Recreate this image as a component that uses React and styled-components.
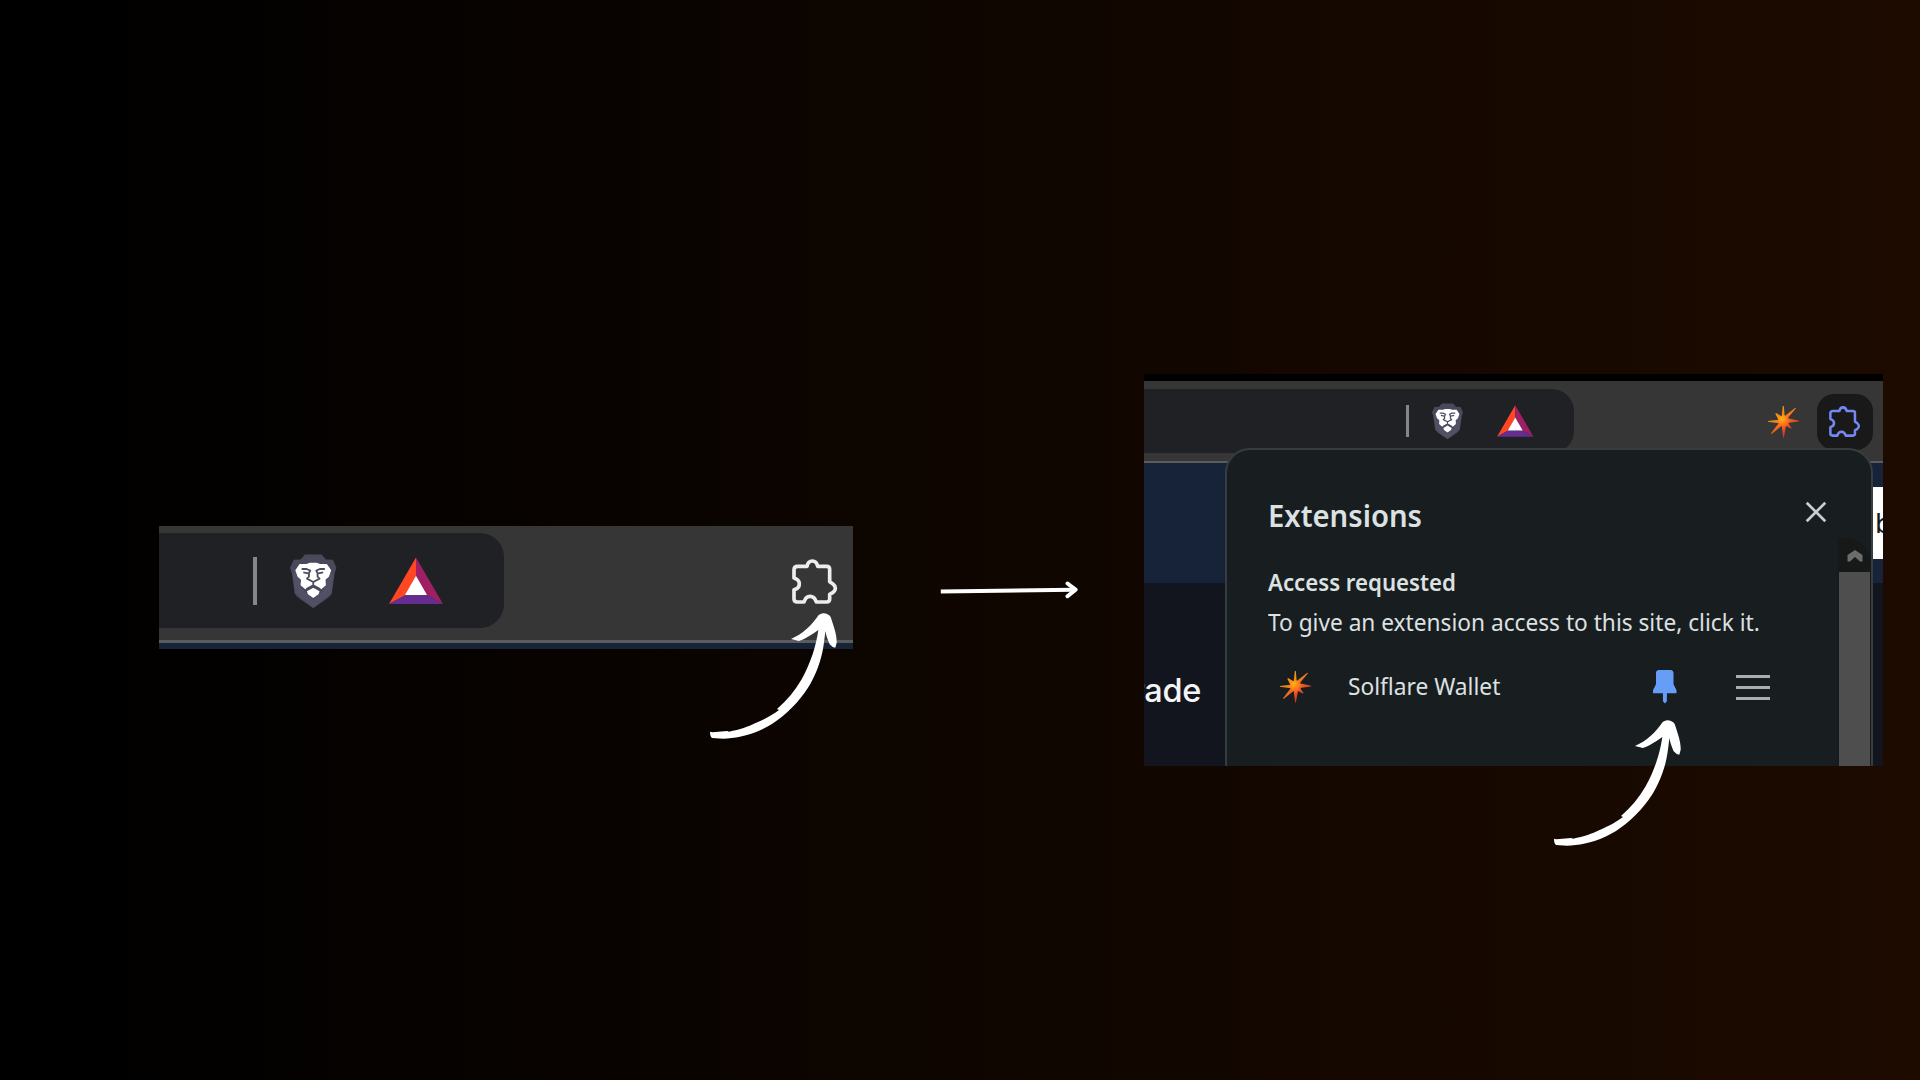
import React from "react";
import styled, { createGlobalStyle } from "styled-components";

const GlobalStyle = createGlobalStyle`
  * { box-sizing: border-box; }
  body { margin: 0; background: #000; overflow: hidden; }
  svg { display: block; }
`;

const Stage = styled.main`
  position: relative;
  display: flex;
  align-items: flex-start;
  width: 1920px;
  height: 1080px;
  padding-left: 158.5px;
  overflow: hidden;
  background: linear-gradient(90deg, #000 0%, #000 2%, #1d0b00 100%);
  font-family: "Noto Sans", "Open Sans", sans-serif;
`;

/* ---- toolbar close-up ---- */

const BarShot = styled.section`
  display: flex;
  flex-direction: column;
  flex: none;
  width: 694.8px;
  height: 123px;
  margin-top: 526px;
  background: #363636;
`;

const BarRow = styled.div`
  display: flex;
  justify-content: space-between;
  height: 114px;
  padding: 7px 16.6px 0 0;
`;

const AddressEnd = styled.div`
  display: flex;
  align-items: flex-start;
  width: ${(p) => p.$w}px;
  height: ${(p) => p.$h}px;
  padding: ${(p) => p.$pad};
  border-radius: 0 ${(p) => p.$r}px ${(p) => p.$r}px 0;
  background: #202124;
`;

const Divider = styled.span`
  width: ${(p) => p.$w}px;
  height: ${(p) => p.$h}px;
  background: #85868a;
`;

const IconSlot = styled.span`
  flex: none;
  width: ${(p) => p.$w}px;
  height: ${(p) => p.$h}px;
  margin: ${(p) => p.$m || 0};
  svg { width: 100%; height: 100%; overflow: visible; }
`;

const Rule = styled.div`
  height: ${(p) => p.$h}px;
  background: #5b5c5d;
`;

const PageStrip = styled.div`
  flex: 1;
  background: #162338;
`;

/* ---- straight connector ---- */

const Connector = styled.svg`
  flex: none;
  width: 138px;
  height: 20px;
  margin: 580px 0 0 87.2px;
`;

/* ---- extensions screenshot ---- */

const MenuShot = styled.section`
  position: relative;
  flex: none;
  display: flex;
  flex-direction: column;
  width: 738.7px;
  height: 392px;
  margin: 374px 0 0 65.5px;
  overflow: hidden;
  background: #13151e;
`;

const TitleEdge = styled.div`
  height: 6.6px;
  background: #000;
`;

const Toolbar = styled.div`
  display: flex;
  height: 80.4px;
  padding: 8px 9.9px 0 0;
  background: #363636;
`;

const ToolbarActions = styled.div`
  display: flex;
  flex: 1;
  justify-content: flex-end;
  gap: 17.5px;
  padding-top: 5px;
`;

const PuzzleButton = styled.div`
  display: flex;
  align-items: center;
  justify-content: center;
  width: 56px;
  height: 56px;
  padding-right: 1px;
  border-radius: 17px;
  background: #191919;
`;

const Hero = styled.div`
  display: flex;
  justify-content: flex-end;
  height: 120.5px;
  padding-top: 24px;
  background: #162338;
`;

const HeroButton = styled.div`
  width: 12px;
  height: 72.5px;
  padding: 14px 0 0 4.5px;
  background: #fff;
  color: #17181c;
  font: 400 27px/45px Inter, sans-serif;
  overflow: hidden;
`;

const PageBody = styled.div`
  display: flex;
  justify-content: flex-end;
  width: 57px;
  padding-top: 86px;
  overflow: hidden;
  color: #f4f4f5;
  font: 500 32.5px/44px Inter, sans-serif;
  letter-spacing: -0.3px;
`;

const Popup = styled.div`
  position: absolute;
  left: 81.5px;
  top: 74.3px;
  display: flex;
  width: 648px;
  height: 340px;
  border: 2px solid #343d40;
  border-radius: 25px;
  background: #181d1f;
  overflow: hidden;
`;

const PopupMain = styled.div`
  display: flex;
  flex-direction: column;
  width: 611px;
  padding: 42.3px 0 0 40.3px;
  color: #dce1e2;
`;

const PopupHeader = styled.header`
  display: flex;
  justify-content: space-between;
  align-items: flex-start;
  width: 558.5px;
  height: 69px;
`;

const Line = styled.span`
  align-self: flex-start;
  font-size: ${(p) => p.$size}px;
  line-height: ${(p) => p.$lh}px;
  font-weight: ${(p) => p.$weight || 400};
  white-space: nowrap;
  transform: scaleX(${(p) => p.$fit});
  transform-origin: left;
`;

const ExtensionRow = styled.div`
  display: flex;
  align-items: flex-start;
  margin-top: 24.7px;
`;

const RowName = styled.div`
  display: flex;
  width: 303.5px;
  margin-left: 37px;
`;

const Lines = styled.div`
  display: flex;
  flex-direction: column;
  gap: 8.3px;
  width: 34px;
  margin: 8.4px 0 0 60px;
`;

const MenuLine = styled.span`
  height: 3px;
  background: #a9aeb0;
`;

const Scroll = styled.div`
  display: flex;
  flex-direction: column;
  flex: none;
  width: 33.5px;
  margin-top: 88px;
  border-top-right-radius: 26px;
  background: #171919;
`;

const ScrollUp = styled.div`
  display: flex;
  justify-content: center;
  height: 33.5px;
  padding: 12px 0 0 0;
`;

const Thumb = styled.div`
  flex: 1;
  width: 31px;
  margin-left: 1.2px;
  background: #4e4e4e;
`;

/* ---- hand-drawn pointer laid over the screenshots ---- */

const Pointer = styled.svg`
  position: absolute;
  left: ${(p) => p.$x}px;
  top: ${(p) => p.$y}px;
  width: 127px;
  height: 126px;
`;

function CurvedPointer({ x, y }) {
  return (
    <Pointer $x={x} $y={y} viewBox="60 280 381 378" fill="#fff">
      <path d="M60 636L67 638L112 634L117 636C150 630 175 621 195 611C225 598 247 586 267 571L261 568C291 543 315 513 335 479C362 430 378 380 385 331C365 345 345 359 326 364L318 362L303 358C340 342 365 317 386 286Q395 280 402 281Q418 284 422 292C431 320 441 345 440 369L436 384Q427 384 419 374C412 358 408 345 406 334C402 375 397 405 389 428C377 466 358 504 334 532C297 579 255 611 217 629C172 650 130 657 100 657L66 655Q60 650 60 636Z" />
    </Pointer>
  );
}

function Lion() {
  return (
    <svg viewBox="0 0 140 163">
      <path fill="#484a5c" d="M45 1H95L108 16L129 17L140 41L134 60L126 119Q121 128 112 134L70 163L28 134Q19 128 14 119L6 60L0 41L11 17L32 16Z" />
      <path fill="#5a5c6e" opacity=".45" d="M8 62L18 50L40 110L70 139L100 110L122 50L132 62L124 117L70 161L16 117Z" />
      <path fill="#fff" d="M29 30L49 30L60 26H80L91 30L111 30L124 49L117 68L107 77L108 94L94 106L84 101L70 94L56 101L46 106L32 94L33 77L23 68L16 49Z" />
      <path fill="#fff" d="M70 101L89 112L86 121L70 132L54 121L51 112Z" />
      <path fill="none" stroke="#4c4e60" strokeWidth="5.5" strokeLinejoin="round" d="M35 45H50L61 50L57 57V68L51 74L70 84L89 74L83 68V57L79 50L90 45H105M40 55L55 58M100 55L85 58M70 84V93M49 105L70 94L91 105" />
    </svg>
  );
}

function BatTriangle() {
  return (
    <svg viewBox="0 0 162 140">
      <path fill="#ff4724" d="M81 0V56L50 113L0 140Z" />
      <path fill="#9e1f63" d="M81 0V56L112 113L162 140Z" />
      <path fill="#662d91" d="M50 113H112L162 140H0Z" />
      <path fill="#fff" d="M81 55L114 113H48Z" />
    </svg>
  );
}

function Puzzle({ color, weight }) {
  return (
    <svg viewBox="0 0 135 135" fill="none" stroke={color} strokeWidth={weight} strokeLinejoin="round">
      <path d="M17 22H45Q48 6 61 6Q74 6 77 22H104Q113 22 113 31V68L122 74Q130 80 130 87Q130 95 122 101L113 106V120Q113 129 104 129H73Q68 112 54 112Q41 112 36 129H16Q6 129 6 120V92Q22 88 22 74Q22 62 6 57V32Q6 22 17 22Z" />
    </svg>
  );
}

function Flare({ id }) {
  return (
    <svg viewBox="0 0 93 95">
      <defs>
        <radialGradient id={id} gradientUnits="userSpaceOnUse" cx="41" cy="38" r="28">
          <stop offset="0" stopColor="#ffb60c" />
          <stop offset=".45" stopColor="#ff8a1a" />
          <stop offset="1" stopColor="#fb4e27" />
        </radialGradient>
        <linearGradient id={`${id}-ray`} gradientUnits="userSpaceOnUse" x1="20" y1="15" x2="70" y2="78">
          <stop offset="0" stopColor="#eda514" />
          <stop offset=".5" stopColor="#ee7120" />
          <stop offset="1" stopColor="#c92f22" />
        </linearGradient>
      </defs>
      <path fill={`url(#${id}-ray)`} d="M44.5 0H47.5L50 30L82 5L84 7L59 37L93 44.5V46.5L60 51L71 66L69 68L54 60L47.5 95H45.5L41 60L11 84L9 82L32 52L0 47V45L31 41L22 23L24 21L41 31Z" />
      <path fill={`url(#${id})`} d="M46 22L51 31L62 27L60 38L70 45L61 51L64 60L54 59L47 70L41 59L31 61L33 51L23 46L32 41L28 29L40 32Z" />
    </svg>
  );
}

export default function App() {
  return (
    <>
      <GlobalStyle />
      <Stage>
        <BarShot>
          <BarRow>
            <AddressEnd $w={345} $h={95} $r={24} $pad="23.5px 0 0 94.6px">
              <Divider $w={4} $h={48} />
              <IconSlot $w={46.5} $h={54.3} $m="-2.2px 0 0 32.7px"><Lion /></IconSlot>
              <IconSlot $w={54} $h={47.5} $m="0 0 0 52.3px"><BatTriangle /></IconSlot>
            </AddressEnd>
            <IconSlot $w={45} $h={45} $m="26px 0 0 0"><Puzzle color="#ededed" weight="11" /></IconSlot>
          </BarRow>
          <Rule $h={2.6} />
          <PageStrip />
        </BarShot>

        <Connector viewBox="0 0 138 20" fill="none" stroke="#fff" strokeWidth="4" strokeLinecap="round" strokeLinejoin="round">
          <path strokeLinecap="butt" d="M0.8 11.6L133 9.8" />
          <path d="M127.5 3.5L135.6 9.6L127.5 16.2" />
        </Connector>

        <MenuShot>
          <TitleEdge />
          <Toolbar>
            <AddressEnd $w={430.5} $h={64} $r={22} $pad="16px 0 0 262.5px">
              <Divider $w={2.7} $h={32.4} />
              <IconSlot $w={31} $h={36.5} $m="-1.5px 0 0 22.5px"><Lion /></IconSlot>
              <IconSlot $w={36.5} $h={31.8} $m="0.5px 0 0 34px"><BatTriangle /></IconSlot>
            </AddressEnd>
            <ToolbarActions>
              <IconSlot $w={31} $h={31.7} $m="12px 0 0 0"><Flare id="flare-bar" /></IconSlot>
              <PuzzleButton>
                <IconSlot $w={31} $h={31} $m="0 0 1px 0"><Puzzle color="#7587f2" weight="11" /></IconSlot>
              </PuzzleButton>
            </ToolbarActions>
          </Toolbar>
          <Rule $h={1.7} />
          <Hero><HeroButton>b</HeroButton></Hero>
          <PageBody>rade</PageBody>

          <Popup>
            <PopupMain>
              <PopupHeader>
                <Line $size={30.5} $lh={44} $weight={600} $fit={0.958}>Extensions</Line>
                <IconSlot $w={20} $h={20} $m="9px 0 0 0">
                  <svg viewBox="0 0 20 20" stroke="#c9cdce" strokeWidth="2.7">
                    <path d="M.7 .7L19.3 19.3M19.3 .7L.7 19.3" />
                  </svg>
                </IconSlot>
              </PopupHeader>
              <Line $size={24} $lh={40} $weight={600} $fit={0.925}>Access requested</Line>
              <Line $size={24} $lh={40} $fit={0.945}>To give an extension access to this site, click it.</Line>
              <ExtensionRow>
                <IconSlot $w={31} $h={31.7} $m="4.5px 0 0 12.5px"><Flare id="flare-row" /></IconSlot>
                <RowName><Line $size={24} $lh={40} $fit={0.947}>Solflare Wallet</Line></RowName>
                <IconSlot $w={23.5} $h={33.5} $m="3.3px 0 0 1.2px">
                  <svg viewBox="0 0 71 101" fill="#669df6">
                    <path d="M17 0H53Q62 1 62 10V43L71 61V70H42V94L36 101L30 94V70H0V61L9 43V10Q9 1 17 0Z" />
                  </svg>
                </IconSlot>
                <Lines><MenuLine /><MenuLine /><MenuLine /></Lines>
              </ExtensionRow>
            </PopupMain>
            <Scroll>
              <ScrollUp>
                <svg width="16" height="12" viewBox="0 0 16 12" fill="#6c6c6c">
                  <path d="M8 0L15.5 5V11.5H13L8 7L3 11.5H.5V5Z" />
                </svg>
              </ScrollUp>
              <Thumb />
            </Scroll>
          </Popup>
        </MenuShot>

        <CurvedPointer x={710} y={613.4} />
        <CurvedPointer x={1553.8} y={719.9} />
      </Stage>
    </>
  );
}
